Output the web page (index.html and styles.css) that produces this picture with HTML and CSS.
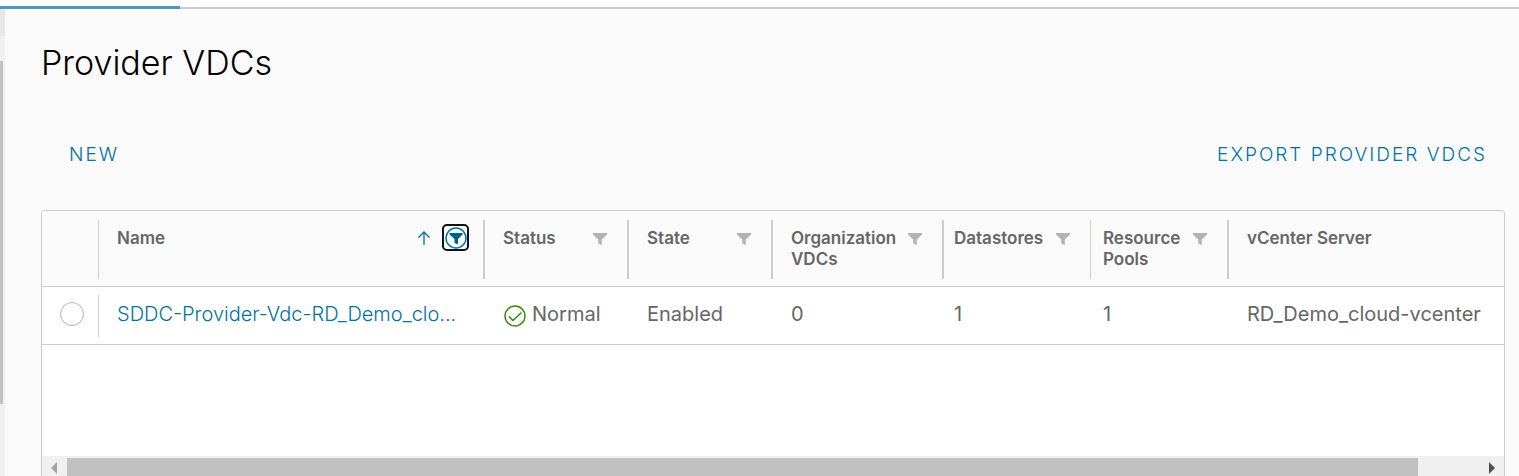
FILE: index.html
```html
<!DOCTYPE html>
<html lang="en">
<head>
<meta charset="utf-8">
<title>Provider VDCs</title>
<link rel="stylesheet" href="styles.css">
</head>
<body>
<svg class="symbols" aria-hidden="true">
  <symbol id="funnel" viewBox="0 0 14 12"><path d="M0 0H14V1.500L8.800 6.500V12L5.200 10.500V6.500L0 1.500Z"/></symbol>
</svg>
<div class="tabs"><div class="tab-active"></div></div>
<div class="shell">
  <aside class="side"><div class="side-item"></div><div class="side-gap"></div><div class="side-thumb"></div></aside>
  <main class="content">
    <h1 class="title">Provider VDCs</h1>
    <div class="actions">
      <button class="action" type="button">NEW</button>
      <button class="action" type="button">EXPORT PROVIDER VDCS</button>
    </div>
    <section class="grid">
      <table class="table">
        <colgroup><col class="c-pick"><col class="c-name"><col class="c-status"><col class="c-state"><col class="c-org"><col class="c-data"><col class="c-pool"><col></colgroup>
        <thead>
          <tr>
            <th><div class="head thin"></div></th>
            <th><div class="head"><span class="label">Name</span>
              <svg class="arrow" viewBox="0 0 14 16"><path d="M7 15V2M1.500 7.500L7 2L12.500 7.500"/></svg>
              <button class="filter on" type="button" aria-label="Filter name"><svg viewBox="0 0 22 22"><circle cx="11" cy="11" r="10"/><path d="M4.500 6H17.500V7.500L13 12V17.500L9.500 16V12L4.500 7.500Z"/></svg></button></div></th>
            <th><div class="head"><span class="label">Status</span><button class="filter" type="button" aria-label="Filter status"><svg><use href="#funnel"/></svg></button></div></th>
            <th><div class="head"><span class="label">State</span><button class="filter" type="button" aria-label="Filter state"><svg><use href="#funnel"/></svg></button></div></th>
            <th><div class="head"><span class="label">Organization VDCs</span><button class="filter" type="button" aria-label="Filter organization VDCs"><svg><use href="#funnel"/></svg></button></div></th>
            <th><div class="head thin narrow"><span class="label">Datastores</span><button class="filter" type="button" aria-label="Filter datastores"><svg><use href="#funnel"/></svg></button></div></th>
            <th><div class="head medium"><span class="label">Resource Pools</span><button class="filter" type="button" aria-label="Filter resource pools"><svg><use href="#funnel"/></svg></button></div></th>
            <th><div class="head last"><span class="label">vCenter Server</span></div></th>
          </tr>
        </thead>
        <tbody>
          <tr>
            <td><div class="cell pick"><input class="radio" type="radio" name="vdc" aria-label="Select SDDC-Provider-Vdc-RD_Demo_clo..."></div></td>
            <td><div class="cell"><a class="link" href="#">SDDC-Provider-Vdc-RD_Demo_clo...</a></div></td>
            <td><div class="cell"><svg class="ok" viewBox="0 0 22 22"><circle cx="11" cy="11" r="10"/><path d="M5 11.500L9 15.500L17.500 7.500"/></svg>Normal</div></td>
            <td><div class="cell">Enabled</div></td>
            <td><div class="cell">0</div></td>
            <td><div class="cell narrow">1</div></td>
            <td><div class="cell medium">1</div></td>
            <td><div class="cell">RD_Demo_cloud-vcenter</div></td>
          </tr>
        </tbody>
      </table>
      <div class="scroll">
        <svg class="tip" viewBox="0 0 6 12"><path d="M6 0V12L0 6Z"/></svg>
        <div class="track"><div class="thumb"></div></div>
        <svg class="tip dark" viewBox="0 0 6 12"><path d="M0 0V12L6 6Z"/></svg>
      </div>
    </section>
  </main>
</div>
</body>
</html>
```
FILE: styles.css
```css
* { box-sizing: border-box; }
body {
  margin: 0;
  height: 100vh;
  overflow: hidden;
  display: flex;
  flex-direction: column;
  background: #fafafa;
  color: #666;
  font-family: Inter, "Liberation Sans", sans-serif;
}
button { border: 0; padding: 0; background: none; font-family: inherit; }
.symbols { display: none; }
.tabs {
  display: flex;
  align-items: flex-end;
  flex: none;
  height: 9px;
  background: #fff;
  border-bottom: 2px solid #ccc;
}
.tab-active { width: 180px; height: 3px; margin-bottom: -2px; background: #4a9ab8; }
.shell { display: flex; flex: 1; min-height: 0; }
.side { flex: none; width: 5px; background: #f0f0f0; }
.side-item { height: 27px; background: #e8e8e8; }
.side-gap { height: 25px; }
.side-thumb { width: 3px; height: 343px; background: #c1c1c1; }
.content { flex: 1; min-width: 0; display: flex; flex-direction: column; padding: 34px 14px 0 36px; }
.title { margin: 0; font-size: 34px; line-height: 40px; font-weight: 300; color: #000; }
.actions { display: flex; justify-content: space-between; padding: 59px 18px 43px 28px; }
.action { font-size: 19px; line-height: 25px; letter-spacing: 2px; color: #0072a3; font-weight: 300; }
.grid {
  flex: 1;
  display: flex;
  flex-direction: column;
  border: 1px solid #ccc;
  border-bottom: 0;
  border-radius: 4px 4px 0 0;
  background: #fff;
  overflow: hidden;
}
.table { width: 100%; table-layout: fixed; border-collapse: separate; border-spacing: 0; }
.c-pick { width: 57px; }
.c-name { width: 386px; }
.c-status, .c-state { width: 144px; }
.c-org { width: 171px; }
.c-data { width: 147px; }
.c-pool { width: 138px; }
th { padding: 9px 0 7px; background: #fafafa; border-bottom: 1px solid #ccc; font-weight: 600; text-align: left; }
td { padding: 8px 0 7px; border-bottom: 1px solid #ccc; }
.head {
  display: flex;
  align-items: flex-start;
  height: 59px;
  padding: 8px 20px 8px 18px;
  border-right: 2px solid #ccc;
  font-size: 17px;
  line-height: 21px;
}
.head.thin { border-right-width: 1px; }
.head.last { border-right: 0; }
.label { flex: 1; min-width: 0; }
.cell { display: flex; align-items: center; height: 42px; padding: 0 18px 4px; font-size: 20px; line-height: 24px; white-space: nowrap; }
.head.narrow, .cell.narrow { padding-left: 10px; }
.head.medium, .cell.medium { padding-left: 12px; }
.cell.pick { padding-right: 0; border-right: 1px solid #ccc; }
.filter { flex: none; width: 14px; height: 21px; display: flex; align-items: center; }
.filter svg { width: 14px; height: 12px; fill: #b3b3b3; }
.filter.on {
  width: 27px;
  height: 27px;
  margin: -4px -6px 0 11px;
  justify-content: center;
  border: 2px solid #111;
  border-radius: 5px;
  background: #fff;
}
.filter.on svg { width: 22px; height: 22px; flex: none; fill: #00608a; }
.filter.on circle { fill: none; stroke: #0072a3; stroke-width: 1.5; }
.arrow { width: 14px; height: 16px; margin-top: 2px; fill: none; stroke: #0072a3; stroke-width: 1.3; }
.radio { appearance: none; flex: none; width: 24px; height: 24px; margin: 0; border: 1px solid #b3b3b3; border-radius: 50%; background: #fff; }
.link { color: #0072a3; text-decoration: none; font-weight: 300; }
.ok { width: 22px; height: 22px; margin: 3px 6px 0 1px; fill: none; stroke: #318700; stroke-width: 1.4; }
.scroll { display: flex; flex: none; height: 20px; margin-top: auto; padding: 2px 9px 0 9px; background: #f0f0f0; }
.tip { width: 6px; height: 12px; margin-top: 4px; fill: #a3a3a3; }
.tip.dark { fill: #505050; }
.track { flex: 1; margin: 0 0 0 10px; }
.thumb { width: 95%; height: 18px; background: #c1c1c1; }
```
